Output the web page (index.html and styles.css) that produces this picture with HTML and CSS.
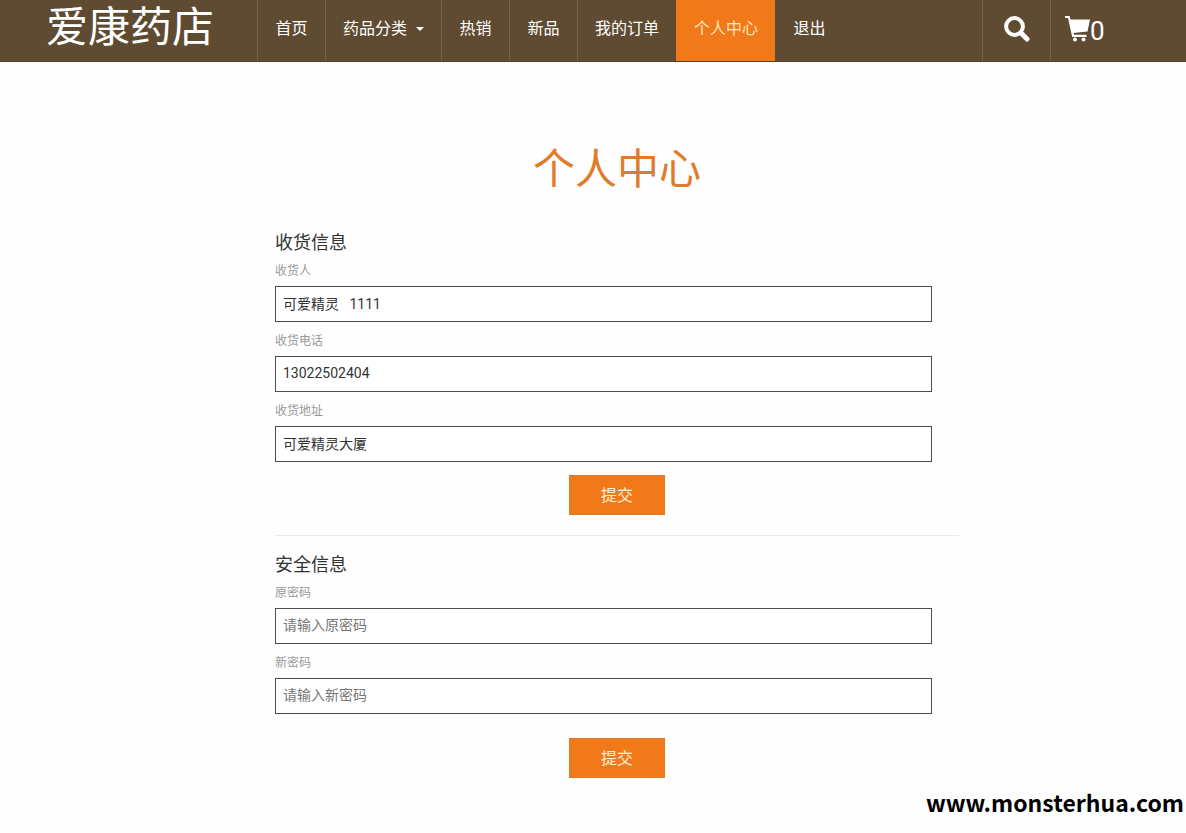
FILE: index.html
```html
<!DOCTYPE html>
<html lang="zh-CN">
<head>
<meta charset="utf-8">
<title>爱康药店 - 个人中心</title>
<link rel="stylesheet" href="styles.css">
</head>
<body>
<header class="topbar">
  <a class="brand" href="#">爱康药店</a>
  <nav class="nav">
    <a class="nav-item" href="#">首页</a>
    <a class="nav-item" href="#">药品分类<span class="caret"></span></a>
    <a class="nav-item" href="#">热销</a>
    <a class="nav-item" href="#">新品</a>
    <a class="nav-item" href="#">我的订单</a>
    <a class="nav-item active" href="#">个人中心</a>
    <a class="nav-item" href="#">退出</a>
  </nav>
  <a class="tool search" href="#" aria-label="搜索">
    <svg width="26" height="26" viewBox="0 0 26 26" fill="none" stroke="currentColor"><circle cx="10.5" cy="10.5" r="8.4" stroke-width="4"/><path d="M17 17l6 6" stroke-width="5" stroke-linecap="round"/></svg>
  </a>
  <a class="tool cart" href="#" aria-label="购物车 0">
    <svg width="25" height="26" viewBox="0 0 25 26" fill="currentColor"><path d="M0 0H4.500L5.600 3.500H25L22.500 15.500L8.500 17L9 18.800H21.500V21H7.200L3 2H0z"/><circle cx="10" cy="23.500" r="2"/><circle cx="18.500" cy="23.500" r="2"/></svg>
    <span class="count">0</span>
  </a>
</header>
<main class="page">
  <h1 class="title">个人中心</h1>
  <form class="section">
    <h2 class="heading">收货信息</h2>
    <label class="label" for="name">收货人</label>
    <input class="field" id="name" type="text" value="可爱精灵   1111">
    <label class="label" for="phone">收货电话</label>
    <input class="field" id="phone" type="text" value="13022502404">
    <label class="label" for="address">收货地址</label>
    <input class="field" id="address" type="text" value="可爱精灵大厦">
    <button class="submit" type="submit">提交</button>
  </form>
  <hr class="divider">
  <form class="section security">
    <h2 class="heading">安全信息</h2>
    <label class="label" for="old">原密码</label>
    <input class="field" id="old" type="password" placeholder="请输入原密码">
    <label class="label" for="new">新密码</label>
    <input class="field" id="new" type="password" placeholder="请输入新密码">
    <button class="submit" type="submit">提交</button>
  </form>
</main>
<footer class="site">www.monsterhua.com</footer>
</body>
</html>
```
FILE: styles.css
```css
* { box-sizing: border-box; }
body {
  margin: 0;
  background: #fefefe;
  color: #333;
  font-family: Roboto, "Noto Sans CJK SC", sans-serif;
  font-size: 14px;
}
a { color: inherit; text-decoration: none; }

.topbar {
  display: flex;
  height: 62px;
  background: #5e4b32;
  border-bottom: 1px solid #51412c;
  color: #fff;
}
.brand {
  width: 257px;
  padding-left: 46px;
  font-size: 42px;
  line-height: 56px;
  white-space: nowrap;
}
.nav { display: flex; }
.nav-item {
  display: flex;
  align-items: center;
  justify-content: center;
  min-width: 68px;
  padding: 0 17px 8px;
  border-left: 1px solid #766349;
  font-size: 16px;
  white-space: nowrap;
}
.nav-item.active {
  background: #f2791a;
  border-color: #f2791a;
  color: #ffe9b8;
}
.nav-item.active + .nav-item { border-color: transparent; }
.caret {
  margin: 4px 0 0 9px;
  border: 4px solid transparent;
  border-top-color: #fff;
  border-bottom: 0;
}
.tool {
  display: flex;
  align-items: center;
  border-left: 1px solid #766349;
}
.search {
  justify-content: center;
  width: 68px;
  margin-left: auto;
  padding-bottom: 4px;
}
.cart {
  width: 136px;
  padding: 0 0 4px 14px;
}
.count {
  padding-top: 4px;
  font-size: 26px;
  line-height: 28px;
}

.page {
  width: 732px;
  max-width: 100%;
  margin: 0 auto;
  padding: 84px 0 0 48px;
}
.title {
  margin: 0 0 39px;
  color: #e07b2c;
  font-size: 42px;
  font-weight: 400;
  line-height: 48px;
  text-align: center;
}
.section { display: flex; flex-direction: column; }
.heading {
  margin: 0;
  font-size: 18px;
  font-weight: 400;
  line-height: 20px;
}
.label {
  margin: 8px 0 5px;
  color: #999;
  font-size: 12px;
  line-height: 20px;
}
.field {
  width: 96%;
  height: 36px;
  margin-bottom: 1px;
  padding: 0 7px 3px;
  border: 1px solid #4c4c4f;
  border-radius: 0;
  background: #fff;
  color: #333;
  font: inherit;
}
.field::placeholder { color: #777; opacity: 1; }
.submit {
  align-self: center;
  width: 96px;
  height: 40px;
  margin-top: 12px;
  padding: 0 0 2px;
  border: 1px solid #dc7b2a;
  background: #f2791a;
  color: #fff3d6;
  font: inherit;
  font-size: 16px;
}
.divider {
  margin: 20px 0 19px;
  border: 0;
  border-top: 1px solid #e8e8e8;
}
.security .submit { margin-top: 23px; }

.site {
  padding: 8px 2px 0 0;
  color: #000;
  font-family: "Noto Sans CJK SC", sans-serif;
  font-size: 23px;
  font-weight: 700;
  line-height: 32px;
  text-align: right;
}
```
